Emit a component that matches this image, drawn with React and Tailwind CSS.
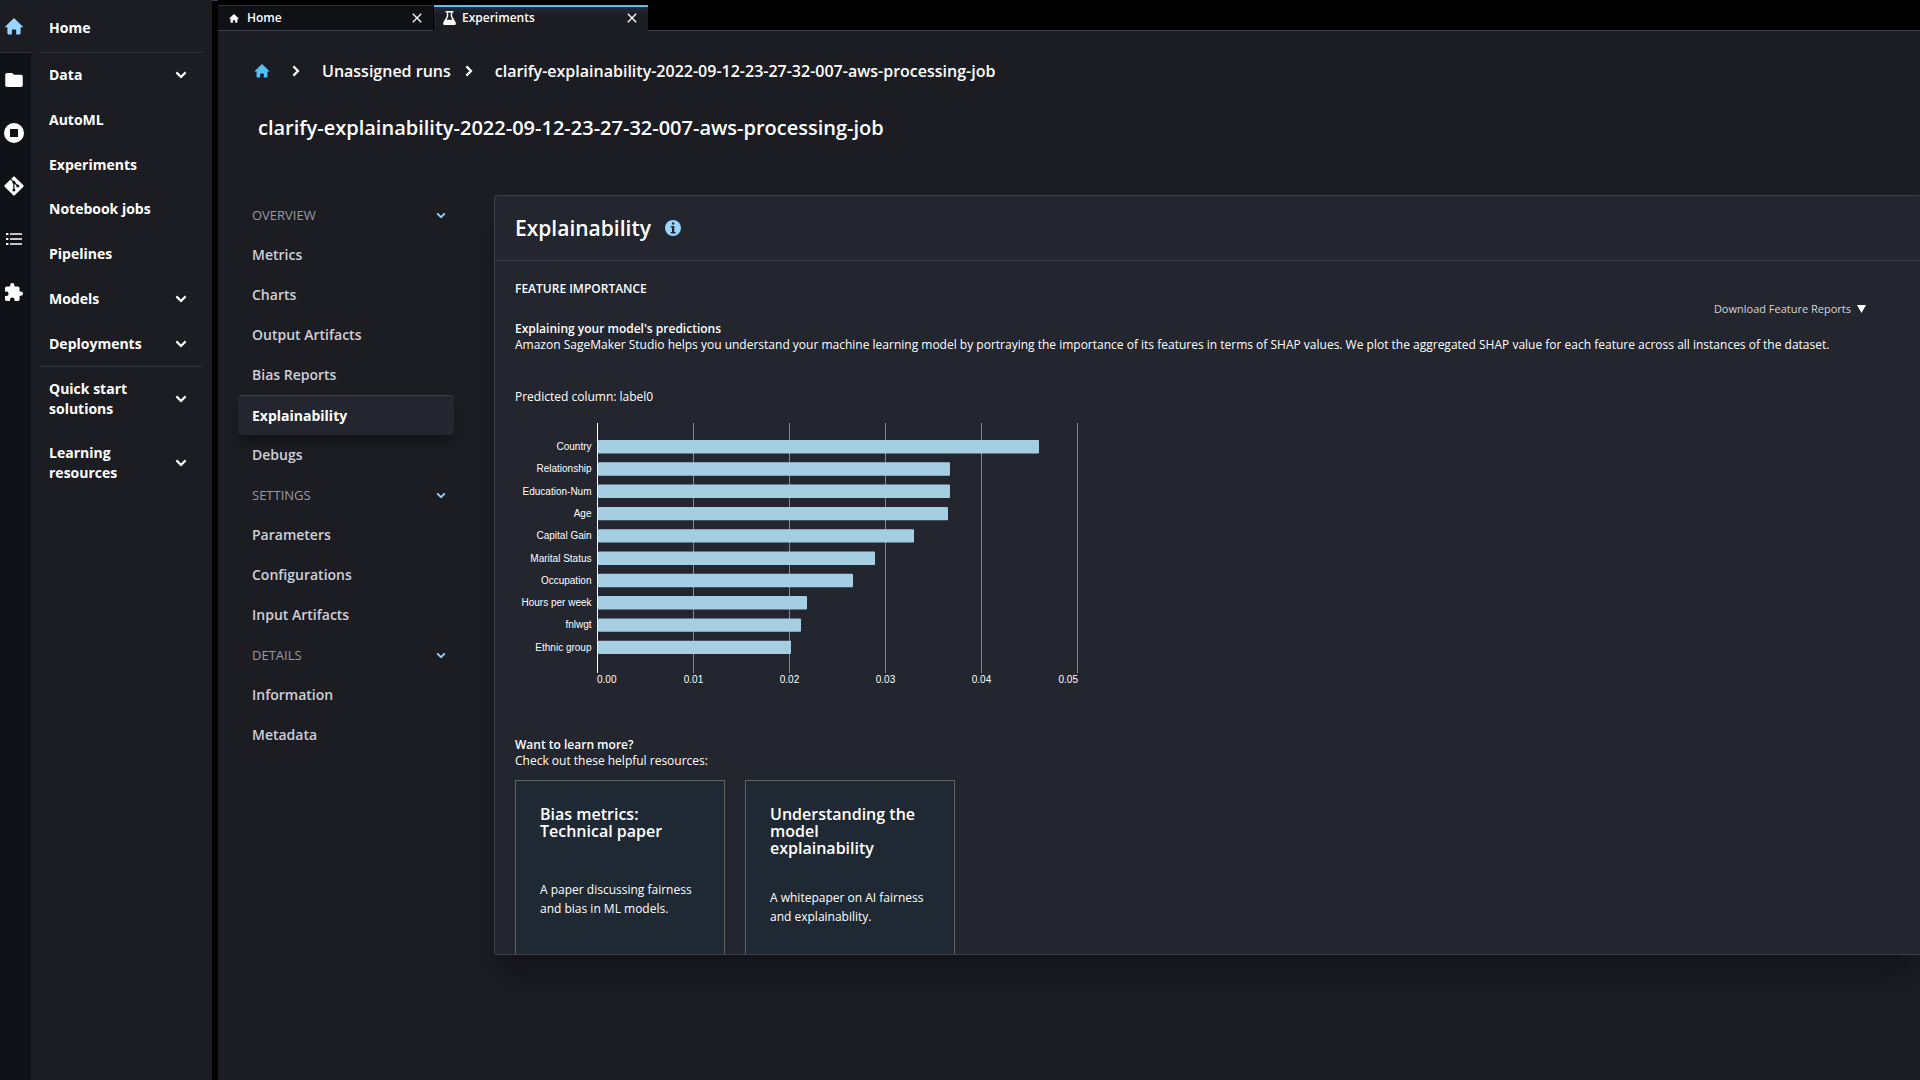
import React from "react";

const FONT = "font-['Open_Sans','Noto_Sans',sans-serif]";

function HomeIcon({ className }) {
  return (
    <svg viewBox="0 0 20 18" className={className} fill="currentColor" aria-hidden="true">
      <path d="M10 0 20 9.700H17V16.200Q17 17.400 15.800 17.400H12.300V13.200Q12.300 12.300 11.400 12.300H8.600Q7.700 12.300 7.700 13.200V17.400H4.200Q3 17.400 3 16.200V9.700H0Z" />
    </svg>
  );
}

function Chevron({ className }) {
  return (
    <svg viewBox="0 0 12 8" className={className} fill="none" stroke="currentColor" strokeWidth="2.2" aria-hidden="true">
      <path d="M1.4 1.4 6 6 10.6 1.4" />
    </svg>
  );
}

function ChevronRight({ className }) {
  return (
    <svg viewBox="0 0 8 12" className={className} fill="none" stroke="currentColor" strokeWidth="2.2" aria-hidden="true">
      <path d="M1.4 1.4 6 6 1.4 10.6" />
    </svg>
  );
}

function CloseIcon({ className }) {
  return (
    <svg viewBox="0 0 10 10" className={className} fill="none" stroke="currentColor" strokeWidth="1.3" aria-hidden="true">
      <path d="M.8.8 9.2 9.2M9.2.8.8 9.2" />
    </svg>
  );
}

function FolderIcon() {
  return (
    <svg viewBox="2 4 20 16" className="h-3.5 w-[18px]" fill="currentColor" aria-hidden="true">
      <path d="M10 4H4c-1.100 0-1.990.9-1.990 2L2 18c0 1.100.9 2 2 2h16c1.100 0 2-.9 2-2V8c0-1.100-.9-2-2-2h-8l-2-2z" />
    </svg>
  );
}

function RunningIcon() {
  return (
    <svg viewBox="0 0 20 20" className="size-5" fill="currentColor" aria-hidden="true">
      <path fillRule="evenodd" d="M10 0a10 10 0 1 0 0 20 10 10 0 0 0 0-20ZM6 6h8v8H6Z" />
    </svg>
  );
}

function GitIcon() {
  return (
    <svg viewBox="0 0 20 20" className="size-5" aria-hidden="true">
      <rect x="2.900" y="2.900" width="14.200" height="14.200" rx="1" transform="rotate(45 10 10)" fill="#fff" />
      <path d="M6.500 2.800 9.900 6.200V14M9.900 6.200 13.700 10" fill="none" stroke="#101116" strokeWidth="1.200" />
      <circle cx="9.900" cy="6.300" r="1.500" fill="#101116" />
      <circle cx="9.900" cy="14" r="1.500" fill="#101116" />
      <circle cx="13.800" cy="10.100" r="1.500" fill="#101116" />
    </svg>
  );
}

function ListIcon() {
  return (
    <svg viewBox="0 0 16 14" className="h-3.5 w-4" fill="none" strokeWidth="2" aria-hidden="true">
      <path d="M4 2H16M4 7H16M4 12H16" stroke="#c4c4c7" />
      <path d="M0 2H2.400M0 7H2.400M0 12H2.400" stroke="#fff" />
    </svg>
  );
}

function PuzzleIcon() {
  return (
    <svg viewBox="2 1 21 21" className="size-[18px]" fill="currentColor" aria-hidden="true">
      <path d="M20.500 11H19V7c0-1.100-.9-2-2-2h-4V3.500a2.500 2.500 0 0 0-5 0V5H4c-1.100 0-2 .9-2 2v3.800h1.500a2.700 2.700 0 0 1 0 5.400H2V20c0 1.100.9 2 2 2h3.800v-1.500a2.700 2.700 0 0 1 5.400 0V22H17c1.100 0 2-.9 2-2v-4h1.500a2.500 2.500 0 0 0 0-5z" />
    </svg>
  );
}

function FlaskIcon() {
  return (
    <svg viewBox="0 0 13 14" className="h-3.5 w-[13px]" fill="currentColor" aria-hidden="true">
      <path fillRule="evenodd" d="M2.600 0H10.400V1.400H9.200V5.200L12.700 11.600Q13.400 14 11.400 14H1.600Q-.4 14 .3 11.600L3.800 5.200V1.400H2.600ZM5.200 1.400V5.600L3.600 8.700H9.400L7.800 5.600V1.400Z" />
    </svg>
  );
}

function InfoIcon() {
  return (
    <svg viewBox="0 0 16 16" className="size-4" aria-label="Info" role="img">
      <circle cx="8" cy="8" r="8" fill="#99d6ff" />
      <path d="M7 2.500h2.300v2H7zM5.800 6h3.500v6h1.200v1.400H5.800V12H7V7.400H5.800z" fill="#23262f" />
    </svg>
  );
}

const railIcons = [
  ["File browser", FolderIcon],
  ["Running terminals", RunningIcon],
  ["Git", GitIcon],
  ["Commands", ListIcon],
  ["Extensions", PuzzleIcon],
];

function Rail() {
  return (
    <nav aria-label="Tools" className="flex w-[31px] shrink-0 flex-col bg-[#101116] text-white">
      <button aria-label="Home" className="flex h-[53px] items-center justify-center border-b border-[#2f3138] bg-[#1c1d22] pr-[3px] text-[#99d6ff]">
        <HomeIcon className="h-[17px] w-5" />
      </button>
      {railIcons.map(([label, Icon]) => (
        <button key={label} aria-label={label} className="flex h-[53px] items-center justify-center pr-[3px]">
          <Icon />
        </button>
      ))}
    </nav>
  );
}

const menu = [
  ["Data", true],
  ["AutoML", false],
  ["Experiments", false],
  ["Notebook jobs", false],
  ["Pipelines", false],
  ["Models", true],
  ["Deployments", true],
];

function MenuItem({ label, expandable, className }) {
  return (
    <button className={"flex w-full items-center justify-between pr-[15px] pl-[9px] text-left leading-5 " + className}>
      <span className="w-24 whitespace-normal">{label}</span>
      {expandable && <Chevron className="h-2 w-3 shrink-0" />}
    </button>
  );
}

function Sidebar() {
  return (
    <nav aria-label="Main" className="w-[181px] shrink-0 bg-[#1c1d22] pr-[10px] pl-[9px] text-sm font-bold whitespace-nowrap text-white">
      <div className="border-b border-[#34363d] pt-1">
        <MenuItem label="Home" className="h-12" />
      </div>
      <div className="grid h-[314px] grid-rows-7 border-b border-[#34363d]">
        {menu.map(([label, expandable]) => (
          <button key={label} className="flex items-center justify-between pr-[15px] pl-[9px] text-left leading-5">
            {label}
            {expandable && <Chevron className="h-2 w-3" />}
          </button>
        ))}
      </div>
      <MenuItem label="Quick start solutions" expandable className="h-16" />
      <MenuItem label="Learning resources" expandable className="h-16" />
    </nav>
  );
}

function Tabs() {
  return (
    <div role="tablist" className="flex h-[31px] shrink-0 bg-black pt-[5px] text-xs font-semibold text-white">
      <div className="flex w-[215px] items-center border-t border-b border-t-[#2c2e35] border-b-[#3d404c] bg-[#101116] pr-[11px] pl-[11px]">
        <button role="tab" aria-selected="false" className="flex flex-1 items-center gap-2">
          <HomeIcon className="h-[9px] w-[10px]" />
          Home
        </button>
        <button aria-label="Close Home"><CloseIcon className="size-[10px]" /></button>
      </div>
      <div className="ml-px flex w-[214px] items-center border-t-2 border-[#54c0fa] bg-linear-to-b from-[#1f2c3c] to-[#1c1d22] to-30% pr-[11px] pb-0.5 pl-[9px]">
        <button role="tab" aria-selected="true" className="flex flex-1 items-center gap-1.5">
          <FlaskIcon />
          Experiments
        </button>
        <button aria-label="Close Experiments"><CloseIcon className="size-[10px]" /></button>
      </div>
      <div className="flex-1 border-b border-[#3d404c]" />
    </div>
  );
}

const JOB = "clarify-explainability-2022-09-12-23-27-32-007-aws-processing-job";

const sections = [
  ["OVERVIEW", ["Metrics", "Charts", "Output Artifacts", "Bias Reports", "Explainability", "Debugs"]],
  ["SETTINGS", ["Parameters", "Configurations", "Input Artifacts"]],
  ["DETAILS", ["Information", "Metadata"]],
];

function SectionNav() {
  return (
    <nav aria-label="Run" className="w-[216px] shrink-0 text-sm font-semibold text-[#d0cfd8]">
      {sections.map(([title, items]) => (
        <div key={title}>
          <button className="flex h-10 w-full items-center justify-between pr-2 pl-[14px] text-[13px] font-normal text-[#9a99a4]">
            {title}
            <Chevron className="h-[7px] w-[10px] text-[#99d6ff]" />
          </button>
          {items.map((item) =>
            item === "Explainability" ? (
              <a key={item} href="#explainability" aria-current="page" className="flex h-10 items-center rounded border-t border-[#3d404c] bg-[#23262f] pl-[14px] font-bold text-white shadow-[0_8px_12px_-2px_rgba(10,10,20,0.5)]">
                {item}
              </a>
            ) : (
              <a key={item} href={"#" + item} className="flex h-10 items-center pl-[14px]">
                {item}
              </a>
            )
          )}
        </div>
      ))}
    </nav>
  );
}

const features = [
  ["Country", 441],
  ["Relationship", 352],
  ["Education-Num", 352],
  ["Age", 350],
  ["Capital Gain", 316],
  ["Marital Status", 277],
  ["Occupation", 255],
  ["Hours per week", 209],
  ["fnlwgt", 203],
  ["Ethnic group", 193],
];

const ticks = ["0.00", "0.01", "0.02", "0.03", "0.04", "0.05"];

function Chart() {
  return (
    <svg width="570" height="270" viewBox="0 0 570 270" role="img" aria-label="Feature importance" className="block font-['Liberation_Sans',Arial,sans-serif] text-[10px]" fill="#fff">
      {ticks.map((t, i) => (
        <g key={t}>
          <line x1={82.5 + i * 96} x2={82.5 + i * 96} y1="0" y2="250" stroke={i ? "#888888" : "#ffffff"} />
          <text x={i === 0 ? 82 : i === 5 ? 563 : 82.5 + i * 96} y="260" textAnchor={i === 0 ? "start" : i === 5 ? "end" : "middle"}>
            {t}
          </text>
        </g>
      ))}
      {features.map(([name, width], i) => (
        <g key={name}>
          <rect x="83" y={17 + i * 22.3} width={width} height="13.4" rx="1" fill="#a6cee3" />
          <text x="76.5" y={27 + i * 22.3} textAnchor="end">{name}</text>
        </g>
      ))}
    </svg>
  );
}

function Card({ title, children }) {
  return (
    <a href="#paper" className="block h-[240px] w-[210px] border border-[#62635f] bg-[#1f2933] px-6 pt-[25px]">
      <h3 className="mb-[31px] min-h-[43px] pr-2 text-base leading-[17px] font-semibold">{title}</h3>
      <p className="text-xs leading-[19px] font-medium">{children}</p>
    </a>
  );
}

function Panel() {
  return (
    <section className="min-w-0 flex-1 overflow-hidden rounded-l border border-r-0 border-[#3d3f47] bg-[#23262f] text-xs leading-4 font-medium text-white shadow-[0_24px_24px_-8px_rgba(10,10,20,0.5)]">
      <header className="flex h-[65px] items-center gap-[14px] border-b border-[#3d3f47] pl-5">
        <h2 className="text-[21px] leading-7 font-semibold">Explainability</h2>
        <InfoIcon />
      </header>
      <div className="pt-5 pl-5">
        <h3 className="font-semibold">FEATURE IMPORTANCE</h3>
        <div className="mt-1 flex justify-end pr-[54px] text-[11px] text-[#d5d5d8]">
          <button className="flex items-center gap-1.5">
            Download Feature Reports
            <svg viewBox="0 0 9 8" className="h-2 w-[9px]" fill="#fff" aria-hidden="true">
              <path d="M0 0H9L4.500 8Z" />
            </svg>
          </button>
        </div>
        <h4 className="mt-1 font-semibold">Explaining your model's predictions</h4>
        <p>
          Amazon SageMaker Studio helps you understand your machine learning model by portraying the importance of its
          features in terms of SHAP values. We plot the aggregated SHAP value for each feature across all instances of
          the dataset.
        </p>
        <p className="mt-9 mb-[18px]">Predicted column: label0</p>
        <Chart />
        <h4 className="mt-11 font-semibold">Want to learn more?</h4>
        <p>Check out these helpful resources:</p>
        <div className="mt-[11px] flex gap-5">
          <Card title="Bias metrics: Technical paper">A paper discussing fairness and bias in ML models.</Card>
          <Card title="Understanding the model explainability">A whitepaper on AI fairness and explainability.</Card>
        </div>
      </div>
    </section>
  );
}

export default function App() {
  return (
    <div className={"flex h-screen overflow-hidden bg-black shadow-[inset_0_1px_0_#3a3f4e] antialiased " + FONT}>
      <Rail />
      <Sidebar />
      <main className="ml-1.5 flex min-w-0 flex-1 flex-col bg-[#1c1d22] text-white">
        <Tabs />
        <nav aria-label="Breadcrumb" className="mt-7 flex h-6 items-center pl-9 font-semibold">
          <a href="#home" aria-label="Home" className="text-[#54c0fa]"><HomeIcon className="h-3.5 w-4" /></a>
          <ChevronRight className="ml-[22px] h-3 w-2" />
          <a href="#runs" className="ml-[22px]">Unassigned runs</a>
          <ChevronRight className="ml-3.5 h-3 w-2" />
          <a href="#job" className="ml-[22px]">{JOB}</a>
        </nav>
        <h1 className="mt-[31px] pl-10 text-xl font-semibold">{JOB}</h1>
        <div className="mt-[53px] mb-[125px] flex min-h-0 flex-1 gap-10 pl-5">
          <SectionNav />
          <Panel />
        </div>
      </main>
    </div>
  );
}
